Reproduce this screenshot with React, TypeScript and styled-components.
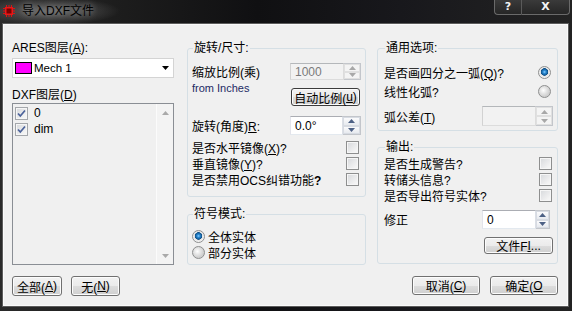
import styled, { createGlobalStyle } from 'styled-components';

const GlobalStyle = createGlobalStyle`
  html, body {
    margin: 0;
    padding: 0;
    background: #161616;
  }
  body {
    font-family: "Liberation Sans", "Noto Sans CJK SC", sans-serif;
    font-size: 12px;
    color: #000;
  }
  * {
    box-sizing: border-box;
  }
`;

function ChipIcon() {
  return (
    <svg width="12" height="12" viewBox="0 0 12 12">
      <g stroke="#e01010" strokeWidth="1">
        <path d="M3.5 0v2M6 0v2M8.5 0v2M3.5 10v2M6 10v2M8.5 10v2M0 3.5h2M0 6h2M0 8.5h2M10 3.5h2M10 6h2M10 8.5h2" />
      </g>
      <rect x="2" y="2" width="8" height="8" fill="#e81818" />
      <rect x="3.5" y="3.5" width="5" height="5" fill="#7a0000" />
    </svg>
  );
}

function CheckMark() {
  return (
    <svg width="11" height="11" viewBox="0 0 11 11">
      <path d="M2 5.5 L4.3 8 L9 2.5" fill="none" stroke="#4b629a" strokeWidth="1.7" />
    </svg>
  );
}

function Arrow({ up, color }: { up?: boolean; color: string }) {
  return (
    <svg width="7" height="4" viewBox="0 0 7 4">
      <path d={up ? 'M0 4 L3.5 0 L7 4 Z' : 'M0 0 L7 0 L3.5 4 Z'} fill={color} />
    </svg>
  );
}

function SpinBox({ w, h, disabled }: { w: number; h: number; disabled?: boolean }) {
  const color = disabled ? '#a8a8a8' : '#4d6185';
  return (
    <Spinner $w={w} $h={h}>
      <SpinHalf $disabled={disabled}>
        <Arrow up color={color} />
      </SpinHalf>
      <SpinHalf $disabled={disabled}>
        <Arrow color={color} />
      </SpinHalf>
    </Spinner>
  );
}

function App() {
  return (
    <>
      <GlobalStyle />
      <Window>
        <TitleBar>
          <IconSlot>
            <ChipIcon />
          </IconSlot>
          <Title>导入DXF文件</Title>
          <CaptionButtons>
            <CaptionButton $w={28}>?</CaptionButton>
            <CaptionButton $w={48}>X</CaptionButton>
          </CaptionButtons>
        </TitleBar>

        <Client>
          <Columns>
            <Column $width={162} $gap={0}>
              <FieldLabel>
                ARES图层(<u>A</u>):
              </FieldLabel>
              <Dropdown>
                <Swatch />
                <DropText>Mech 1</DropText>
                <DropArrow>
                  <Arrow color="#000" />
                </DropArrow>
              </Dropdown>
              <FieldLabel $top={10}>
                DXF图层(<u>D</u>)
              </FieldLabel>
              <ListBox>
                <ListItems>
                  <ListRow>
                    <CheckBox $muted>
                      <CheckMark />
                    </CheckBox>
                    <ListText>0</ListText>
                  </ListRow>
                  <ListRow>
                    <CheckBox $muted>
                      <CheckMark />
                    </CheckBox>
                    <ListText>dim</ListText>
                  </ListRow>
                </ListItems>
                <ScrollBar>
                  <ScrollArrow>
                    <Arrow up color="#a9a9a9" />
                  </ScrollArrow>
                  <ScrollArrow>
                    <Arrow color="#a9a9a9" />
                  </ScrollArrow>
                </ScrollBar>
              </ListBox>
            </Column>

            <Column $width={179} $gap={13}>
              <Group $pl={4} $pr={4} $pb={9}>
                <Legend $indent={1}>旋转/尺寸:</Legend>
                <Row $top={8} $h={17}>
                  <span>缩放比例(乘)</span>
                  <Field>
                    <TextInput $w={54} $h={17} $disabled>
                      1000
                    </TextInput>
                    <SpinBox w={17} h={17} disabled />
                  </Field>
                </Row>
                <Row $top={1} $h={25} $align="flex-start">
                  <SmallNote>from Inches</SmallNote>
                  <PushButton $w={69} $h={18} $top={7} $right={1} $focused>
                    自动比例(<u>u</u>)
                  </PushButton>
                </Row>
                <Row $top={10} $h={19}>
                  <span>
                    旋转(角度)<u>R</u>:
                  </span>
                  <Field>
                    <TextInput $w={53} $h={19}>
                      0.0°
                    </TextInput>
                    <SpinBox w={18} h={19} />
                  </Field>
                </Row>
                <Row $top={4} $h={16}>
                  <span>
                    是否水平镜像(<u>X</u>)?
                  </span>
                  <CheckBox $right={2} />
                </Row>
                <Row $h={16}>
                  <span>
                    垂直镜像(<u>Y</u>)?
                  </span>
                  <CheckBox $right={2} />
                </Row>
                <Row $h={16}>
                  <span>
                    是否禁用OCS纠错功能<b>?</b>
                  </span>
                  <CheckBox $right={2} />
                </Row>
              </Group>

              <Group $top={10} $pl={4} $pr={4} $pb={4}>
                <Legend $indent={1}>符号模式:</Legend>
                <RadioRow $top={7}>
                  <Radio $checked />
                  <span>全体实体</span>
                </RadioRow>
                <RadioRow>
                  <Radio />
                  <span>部分实体</span>
                </RadioRow>
              </Group>
            </Column>

            <Column $width={181} $gap={11}>
              <Group $pl={6} $pr={4} $pb={4}>
                <Legend $indent={1}>通用选项:</Legend>
                <Row $top={9} $h={16}>
                  <span>
                    是否画四分之一弧(<u>Q</u>)?
                  </span>
                  <Radio $checked $right={2} />
                </Row>
                <Row $top={3} $h={16}>
                  <span>线性化弧?</span>
                  <Radio $right={2} />
                </Row>
                <Row $top={7} $h={20}>
                  <span>
                    弧公差(<u>T</u>)
                  </span>
                  <Field>
                    <TextInput $w={54} $h={20} $disabled />
                    <SpinBox w={17} h={20} disabled />
                  </Field>
                </Row>
              </Group>

              <Group $top={9} $pl={6} $pr={4} $pb={9}>
                <Legend $indent={1}>输出:</Legend>
                <Row $top={1} $h={16}>
                  <span>是否生成警告?</span>
                  <CheckBox $right={1} />
                </Row>
                <Row $h={16}>
                  <span>转储头信息?</span>
                  <CheckBox $right={1} />
                </Row>
                <Row $h={16}>
                  <span>是否导出符号实体?</span>
                  <CheckBox $right={1} />
                </Row>
                <Row $top={7} $h={19}>
                  <span>修正</span>
                  <Field $right={3}>
                    <TextInput $w={54} $h={19}>
                      0
                    </TextInput>
                    <SpinBox w={14} h={19} />
                  </Field>
                </Row>
                <Row $top={8} $h={17} $justify="flex-end">
                  <PushButton $w={69} $h={17}>
                    文件F<u>I</u>...
                  </PushButton>
                </Row>
              </Group>
            </Column>
          </Columns>

          <Footer>
            <ButtonGroup $gap={9}>
              <PushButton $w={50} $h={20}>
                全部(<u>A</u>)
              </PushButton>
              <PushButton $w={49} $h={20}>
                无(<u>N</u>)
              </PushButton>
            </ButtonGroup>
            <ButtonGroup $gap={10}>
              <PushButton $w={68} $h={19}>
                取消(<u>C</u>)
              </PushButton>
              <PushButton $w={68} $h={19}>
                确定(<u>O</u>
              </PushButton>
            </ButtonGroup>
          </Footer>
        </Client>
      </Window>
    </>
  );
}

const Window = styled.div`
  width: 572px;
  height: 311px;
  display: flex;
  flex-direction: column;
  overflow: hidden;
  background: linear-gradient(
    90deg,
    #2a2a2a 0%,
    #1d1d1d 20%,
    #101012 45%,
    #18181c 70%,
    #232323 100%
  );
`;

const TitleBar = styled.div`
  height: 24px;
  flex: none;
  display: flex;
  align-items: flex-start;
  padding-left: 3px;
  background: radial-gradient(
    ellipse 70px 14px at 50px 11px,
    rgba(150, 150, 150, 0.55),
    rgba(150, 150, 150, 0) 100%
  );
`;

const IconSlot = styled.div`
  width: 12px;
  height: 12px;
  margin-top: 5px;
`;

const Title = styled.div`
  margin: 4px 0 0 7px;
  font-size: 12px;
  line-height: 14px;
  color: #000;
  text-shadow: 0 0 6px rgba(255, 255, 255, 0.5);
`;

const CaptionButtons = styled.div`
  margin-left: auto;
  margin-right: 2px;
  display: flex;
`;

const CaptionButton = styled.div<{ $w: number }>`
  width: ${(p) => p.$w}px;
  height: 15px;
  border: 1px solid #6a6a6a;
  border-top: none;
  background: linear-gradient(#3a3a3a, #262626);
  color: #f4f4f4;
  font-family: "DejaVu Sans", sans-serif;
  font-weight: bold;
  font-size: 11px;
  line-height: 13px;
  text-align: center;
  &:first-child {
    border-bottom-left-radius: 4px;
    border-right: 1px solid #5a5a5a;
  }
  &:last-child {
    border-left: none;
    border-bottom-right-radius: 4px;
  }
`;

const Client = styled.div`
  flex: 1;
  margin: 0 4px 5px 3px;
  background: #f0f0f0;
  border: 1px solid #fafafa;
  box-shadow: 0 0 0 1px #5c5c5c;
  padding: 16px 9px 0 8px;
  display: flex;
  flex-direction: column;
`;

const Columns = styled.div`
  display: flex;
  height: 224px;
`;

const Column = styled.div<{ $width: number; $gap: number }>`
  width: ${(p) => p.$width}px;
  margin-left: ${(p) => p.$gap}px;
  display: flex;
  flex-direction: column;
`;

const FieldLabel = styled.div<{ $top?: number }>`
  margin-top: ${(p) => p.$top ?? 0}px;
  line-height: 14px;
  height: 14px;
`;

const Dropdown = styled.div`
  margin-top: 3px;
  height: 20px;
  background: #fff;
  border: 1px solid #d4d4d4;
  display: flex;
  align-items: center;
  padding-left: 2px;
`;

const Swatch = styled.div`
  width: 17px;
  height: 12px;
  background: #ff00ff;
  border: 1px solid #000;
`;

const DropText = styled.span`
  margin-left: 2px;
  font-size: 11.5px;
`;

const DropArrow = styled.div`
  margin-left: auto;
  margin-right: 4px;
  display: flex;
`;

const ListBox = styled.div`
  margin-top: 1px;
  height: 162px;
  border: 1px solid #8a8e94;
  display: flex;
`;

const ListItems = styled.div`
  flex: 1;
  padding: 1px 2px;
`;

const ListRow = styled.div`
  height: 16px;
  display: flex;
  align-items: center;
`;

const ListText = styled.span`
  margin-left: 6px;
`;

const ScrollBar = styled.div`
  width: 17px;
  border-left: 1px solid #fbfbfb;
  background: #f3f3f3;
  display: flex;
  flex-direction: column;
  justify-content: space-between;
`;

const ScrollArrow = styled.div`
  height: 17px;
  display: flex;
  align-items: center;
  justify-content: center;
`;

const Group = styled.fieldset<{ $top?: number; $pl: number; $pr: number; $pb: number }>`
  margin: ${(p) => p.$top ?? 0}px 0 0 0;
  padding: 0 ${(p) => p.$pr}px ${(p) => p.$pb}px ${(p) => p.$pl}px;
  border: 1px solid #d5dfe5;
  border-radius: 3px;
  min-width: 0;
`;

const Legend = styled.legend<{ $indent: number }>`
  padding: 0 1px;
  margin-left: ${(p) => p.$indent}px;
  line-height: 14px;
  height: 14px;
`;

const Row = styled.div<{ $top?: number; $h: number; $align?: string; $justify?: string }>`
  margin-top: ${(p) => p.$top ?? 0}px;
  height: ${(p) => p.$h}px;
  display: flex;
  align-items: ${(p) => p.$align ?? 'center'};
  justify-content: ${(p) => p.$justify ?? 'space-between'};
  white-space: nowrap;
`;

const SmallNote = styled.span`
  margin-top: 1px;
  font-size: 11px;
  line-height: 13px;
  color: #1c2a64;
`;

const Field = styled.div<{ $right?: number }>`
  display: flex;
  margin-right: ${(p) => p.$right ?? 0}px;
`;

const TextInput = styled.div<{ $w: number; $h: number; $disabled?: boolean }>`
  width: ${(p) => p.$w}px;
  height: ${(p) => p.$h}px;
  border: 1px solid;
  border-color: ${(p) => (p.$disabled ? '#b4b7ba #dcdcdc #dcdcdc #d2d2d2' : '#abadb3 #dbdfe6 #e3e9ef #e2e3ea')};
  background: ${(p) => (p.$disabled ? '#f2f2f2' : '#fff')};
  color: ${(p) => (p.$disabled ? '#7a7a7a' : '#000')};
  padding-left: 4px;
  display: flex;
  align-items: center;
`;

const Spinner = styled.div<{ $w: number; $h: number }>`
  width: ${(p) => p.$w}px;
  height: ${(p) => p.$h}px;
  display: flex;
  flex-direction: column;
  border: 1px solid #c3c6cb;
  border-left: none;
  background: #f4f4f4;
`;

const SpinHalf = styled.div<{ $disabled?: boolean }>`
  flex: 1;
  display: flex;
  align-items: center;
  justify-content: center;
  border: 1px solid ${(p) => (p.$disabled ? '#e0e0e0' : '#d7dbe2')};
  background: ${(p) =>
    p.$disabled ? '#f4f4f4' : 'linear-gradient(#fbfbfc, #e7eaef)'};
`;

const CheckBox = styled.span<{ $right?: number; $muted?: boolean }>`
  width: 13px;
  height: 13px;
  flex: none;
  margin-right: ${(p) => p.$right ?? 0}px;
  border: 1px solid ${(p) => (p.$muted ? '#a4a7ab' : '#8e8f8f')};
  box-shadow: inset 0 0 0 1px #f6f6f6;
  background: linear-gradient(135deg, #d6d8db 0%, #f4f4f4 80%);
  display: flex;
  align-items: center;
  justify-content: center;
`;

const Radio = styled.span<{ $checked?: boolean; $right?: number }>`
  width: 13px;
  height: 13px;
  flex: none;
  margin-right: ${(p) => p.$right ?? 0}px;
  border-radius: 50%;
  border: 1px solid #8e8f8f;
  background: ${(p) =>
    p.$checked
      ? 'radial-gradient(circle at 50% 45%, #8fd0ff 0, #2a8ad4 1.5px, #0f4f86 3.5px, #e4e4e4 4px, #f5f5f5 6px)'
      : 'radial-gradient(circle at 40% 40%, #ffffff 0, #e6e6e6 3px, #d0d0d0 6px)'};
`;

const RadioRow = styled.div<{ $top?: number }>`
  margin-top: ${(p) => p.$top ?? 0}px;
  height: 16px;
  display: flex;
  align-items: center;
  gap: 3px;
`;

const PushButton = styled.div<{
  $w: number;
  $h: number;
  $top?: number;
  $right?: number;
  $focused?: boolean;
}>`
  width: ${(p) => p.$w}px;
  height: ${(p) => p.$h}px;
  margin-top: ${(p) => p.$top ?? 0}px;
  margin-right: ${(p) => p.$right ?? 0}px;
  border: 1px solid ${(p) => (p.$focused ? '#3c3c3c' : '#707070')};
  border-radius: 3px;
  box-shadow: inset 0 0 0 1px #fcfcfc;
  background: linear-gradient(#f2f2f2 0%, #ebebeb 50%, #dddddd 51%, #cfcfcf 100%);
  display: flex;
  align-items: center;
  justify-content: center;
  white-space: nowrap;
  flex: none;
`;

const Footer = styled.div`
  margin-top: 11px;
  display: flex;
  justify-content: space-between;
  align-items: flex-start;
`;

const ButtonGroup = styled.div<{ $gap: number }>`
  display: flex;
  gap: ${(p) => p.$gap}px;
`;

export default App;
